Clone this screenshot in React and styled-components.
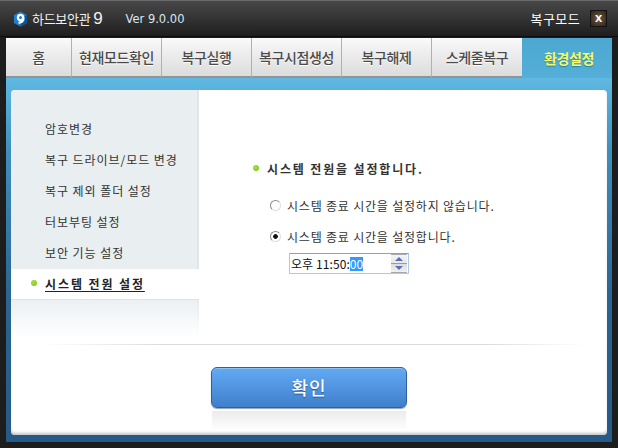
import React from 'react';
import styled, { createGlobalStyle } from 'styled-components';

const GlobalStyle = createGlobalStyle`
    html, body { margin: 0; padding: 0; }
    body {
        width: 618px;
        height: 448px;
        overflow: hidden;
        background: #1c1c1c;
        font-family: "Noto Sans CJK KR", "Liberation Sans", sans-serif;
    }
`
const Window = styled.div`
    width: 618px;
    height: 448px;
    box-sizing: border-box;
    display: flex;
    flex-direction: column;
    padding: 0 6px 6px;
    background: #1d1d1d;
    border-top: 1px solid #6a6a6a;
`
const TitleBar = styled.div`
    height: 36px;
    margin: 0 -6px;
    padding: 0 10px 0 13px;
    flex: none;
    display: flex;
    align-items: center;
    background: linear-gradient(#484848, #1e1e1e);
    border-bottom: 1px solid #0c0c0c;
    box-sizing: border-box;
`
const Logo = styled.svg`
    width: 15px;
    height: 16px;
    margin-right: 4px;
`
const Product = styled.span`
    font-size: 13px;
    color: #f0f0f0;
    letter-spacing: -0.3px;
`
const BigNine = styled.span`
    font-family: "Liberation Sans", sans-serif;
    font-size: 17px;
    margin-left: 3px;
`
const Version = styled.span`
    font-family: "DejaVu Sans", sans-serif;
    font-size: 11.5px;
    color: #d8e8f4;
    margin-left: 23px;
`
const Mode = styled.span`
    margin-left: auto;
    font-size: 13px;
    color: #ffffff;
    letter-spacing: 0.4px;
`
const CloseBtn = styled.button`
    width: 17px;
    height: 17px;
    margin-left: 10px;
    margin-right: 1px;
    padding: 0 0 2px;
    display: flex;
    align-items: center;
    justify-content: center;
    border: 1px solid #141210;
    background: radial-gradient(circle, #6e5a42, #33281c 90%);
    color: #fff;
    font-family: "Liberation Sans", sans-serif;
    font-size: 13px;
    font-weight: 700;
    line-height: 1;
`
const Tabs = styled.div`
    height: 40px;
    flex: none;
    margin-top: 1px;
    display: flex;
`
const Tab = styled.div`
    width: ${p => p.$width}px;
    box-sizing: border-box;
    display: flex;
    align-items: center;
    justify-content: center;
    padding-left: ${p => (p.$active ? 4 : 0)}px;
    font-size: 14px;
    letter-spacing: -0.4px;
    color: ${p => (p.$active ? '#f8fb62' : '#4a4a4a')};
    font-weight: ${p => (p.$active ? 700 : 500)};
    background: ${p => (p.$active
        ? 'linear-gradient(#4ba8d0, #55afd8)'
        : 'linear-gradient(#fafafa, #f0f0f0 30%, #dcdcdc)')};
    border-right: ${p => (p.$active || p.$last ? 'none' : '1px solid #b0b0b0')};
    border-bottom: ${p => (p.$active ? 'none' : '2px solid #8f9498')};
    text-shadow: ${p => (p.$active ? '0 1px 1px #2b7ca0' : '0 1px 0 #fff')};
`
const Panel = styled.div`
    flex: 1;
    display: flex;
    padding: 12px 5px 7px;
    background: linear-gradient(#5fb9e2, #3f8fbd 20%, #2a6593 60%, #265a86);
`
const Card = styled.div`
    flex: 1;
    display: flex;
    flex-direction: column;
    border-radius: 4px;
    background: #fff;
    overflow: hidden;
    box-shadow: inset 0 -3px 3px -1px #c4c4c4;
`
const Body = styled.div`
    height: 254px;
    flex: none;
    display: flex;
`
const Divider = styled.div`
    height: 1px;
    flex: none;
    background: linear-gradient(90deg, #fff 5%, #dcdcdc 25%, #dcdcdc 80%, #fff 96%);
`
const Side = styled.nav`
    width: 188px;
    flex: none;
    box-sizing: border-box;
    padding-top: 24px;
    display: flex;
    flex-direction: column;
    background: linear-gradient(#e9eef1 0, #e9eef1 205px, #ffffff 248px);
    border-right: 2px solid;
    border-image: linear-gradient(#e2e5e8 80%, #ffffff 97%) 1;
`
const SideItem = styled.div`
    height: 31px;
    box-sizing: border-box;
    display: flex;
    align-items: center;
    padding-left: ${p => (p.$active ? '20px' : '34px')};
    padding-bottom: 2px;
    font-size: 12px;
    letter-spacing: ${p => (p.$active ? '1.9px' : '0.95px')};
    color: #333;
    ${p => p.$active && `
        width: 188px;
        flex: none;
        background: #fff;
        border-bottom: 1px solid #dfe2e5;
        font-weight: 700;
        color: #222;
    `}
`
const Underlined = styled.span`
    text-decoration: underline;
    text-underline-offset: 2px;
`
const Dot = styled.span`
    width: 6px;
    height: 6px;
    flex: none;
    border-radius: 50%;
    background: radial-gradient(circle at 40% 35%, #a8e04a, #78c012);
    margin-right: ${p => p.$gap}px;
`
const Content = styled.section`
    flex: 1;
    padding-top: 69px;
    padding-left: 54px;
`
const Heading = styled.div`
    display: flex;
    align-items: center;
    font-size: 12px;
    font-weight: 700;
    letter-spacing: 1.85px;
    color: #333;
    height: 18px;
`
const Options = styled.div`
    margin-top: 19px;
    margin-left: 17px;
    display: flex;
    flex-direction: column;
    gap: 13px;
`
const Option = styled.label`
    display: flex;
    align-items: center;
    height: 18px;
    font-size: 12px;
    letter-spacing: 0.8px;
    color: #333;
`
const Radio = styled.span`
    width: 11px;
    height: 11px;
    box-sizing: border-box;
    margin-right: 6px;
    flex: none;
    border-radius: 50%;
    border: 1px solid #8a8a8a;
    border-right-color: #dedede;
    border-bottom-color: #dedede;
    background: ${p => (p.$checked ? 'radial-gradient(circle, #111 0, #111 2px, #fff 2.6px)' : '#fff')};
`
const TimeField = styled.div`
    width: 120px;
    height: 21px;
    margin: -5px 0 0 19px;
    box-sizing: border-box;
    display: flex;
    align-items: center;
    padding: 0 1px 0 1px;
    border: 1px solid #a9cbe6;
    border-top-color: #7fa6c8;
    background: #fff;
    font-size: 12px;
    letter-spacing: 0.08px;
    color: #111;
`
const Selected = styled.span`
    background: #3399ff;
    color: #fff;
    height: 14px;
    line-height: 14px;
`
const Spinner = styled.div`
    margin-left: auto;
    width: 16px;
    display: flex;
    flex-direction: column;
    border-top: 1px solid #a8a8b0;
    border-bottom: 1px solid #a8a8b0;
`
const SpinBtn = styled.div`
    height: 8px;
    display: flex;
    align-items: center;
    justify-content: center;
    background: ${p => (p.$up ? 'linear-gradient(#f4f4f6, #e6e6ea)' : 'linear-gradient(#dcdce0, #f0f0f2)')};
    ${p => p.$up && 'border-bottom: 1px solid #9a9aa2;'}
    &::after {
        content: '';
        border-left: 4px solid transparent;
        border-right: 4px solid transparent;
        ${p => (p.$up ? 'border-bottom: 4px solid #5a70b4;' : 'border-top: 4px solid #5a70b4;')}
    }
`
const Footer = styled.div`
    flex: 1;
    display: flex;
    flex-direction: column;
    align-items: center;
    padding-top: 22px;
`
const OkBtn = styled.button`
    width: 196px;
    height: 41px;
    flex: none;
    padding: 0 0 2px;
    border: 1px solid #2f5f9f;
    border-radius: 6px;
    background: linear-gradient(#62aaf3, #3f7fcb);
    box-shadow: inset 0 1px 0 #8cc2f6, 0 1px 1px #8fa0b5;
    color: #fff;
    font-family: inherit;
    font-size: 18px;
    font-weight: 500;
    letter-spacing: 1px;
    text-shadow: 0 1px 1px #2a5a90;
`
const Reflection = styled.div`
    width: 194px;
    height: 20px;
    margin-top: 3px;
    border-radius: 0 0 6px 6px;
    background: linear-gradient(#ececec, #ffffff);
`

const tabs = [
    { label: '홈', width: 66 },
    { label: '현재모드확인', width: 90 },
    { label: '복구실행', width: 90 },
    { label: '복구시점생성', width: 90 },
    { label: '복구해제', width: 90 },
    { label: '스케줄복구', width: 90, last: true },
    { label: '환경설정', width: 90, active: true },
]

const menu = ['암호변경', '복구 드라이브/모드 변경', '복구 제외 폴더 설정', '터보부팅 설정', '보안 기능 설정']

const App = () => {
    return (
        <>
            <GlobalStyle />
            <Window>
                <TitleBar>
                    <Logo viewBox="0 0 15 16">
                        <path d="M7.5 0.5 L14 4 V12 L7.5 15.5 L1 12 V4 Z" fill="#1f7fd0" />
                        <path d="M14 4 V12 L7.5 15.5 V13 L12 10 V5 Z" fill="#12508c" />
                        <circle cx="7.5" cy="6.5" r="2.6" fill="#1f7fd0" stroke="#fff" strokeWidth="2.2" />
                        <path d="M10.4 6.5 C10.4 10 9 11.6 5.6 11.8" fill="none" stroke="#fff" strokeWidth="2.2" />
                    </Logo>
                    <Product>하드보안관<BigNine>9</BigNine></Product>
                    <Version>Ver 9.0.00</Version>
                    <Mode>복구모드</Mode>
                    <CloseBtn>x</CloseBtn>
                </TitleBar>
                <Tabs>
                    {tabs.map(t => (
                        <Tab key={t.label} $width={t.width} $active={t.active} $last={t.last}>{t.label}</Tab>
                    ))}
                </Tabs>
                <Panel>
                    <Card>
                        <Body>
                            <Side>
                                {menu.map(m => <SideItem key={m}>{m}</SideItem>)}
                                <SideItem $active><Dot $gap={8} /><Underlined>시스템 전원 설정</Underlined></SideItem>
                            </Side>
                            <Content>
                                <Heading><Dot $gap={8} />시스템 전원을 설정합니다.</Heading>
                                <Options>
                                    <Option><Radio />시스템 종료 시간을 설정하지 않습니다.</Option>
                                    <Option><Radio $checked />시스템 종료 시간을 설정합니다.</Option>
                                    <TimeField>
                                        오후 11:50:<Selected>00</Selected>
                                        <Spinner>
                                            <SpinBtn $up />
                                            <SpinBtn />
                                        </Spinner>
                                    </TimeField>
                                </Options>
                            </Content>
                        </Body>
                        <Divider />
                        <Footer>
                            <OkBtn>확인</OkBtn>
                            <Reflection />
                        </Footer>
                    </Card>
                </Panel>
            </Window>
        </>
    )
}

export default App
